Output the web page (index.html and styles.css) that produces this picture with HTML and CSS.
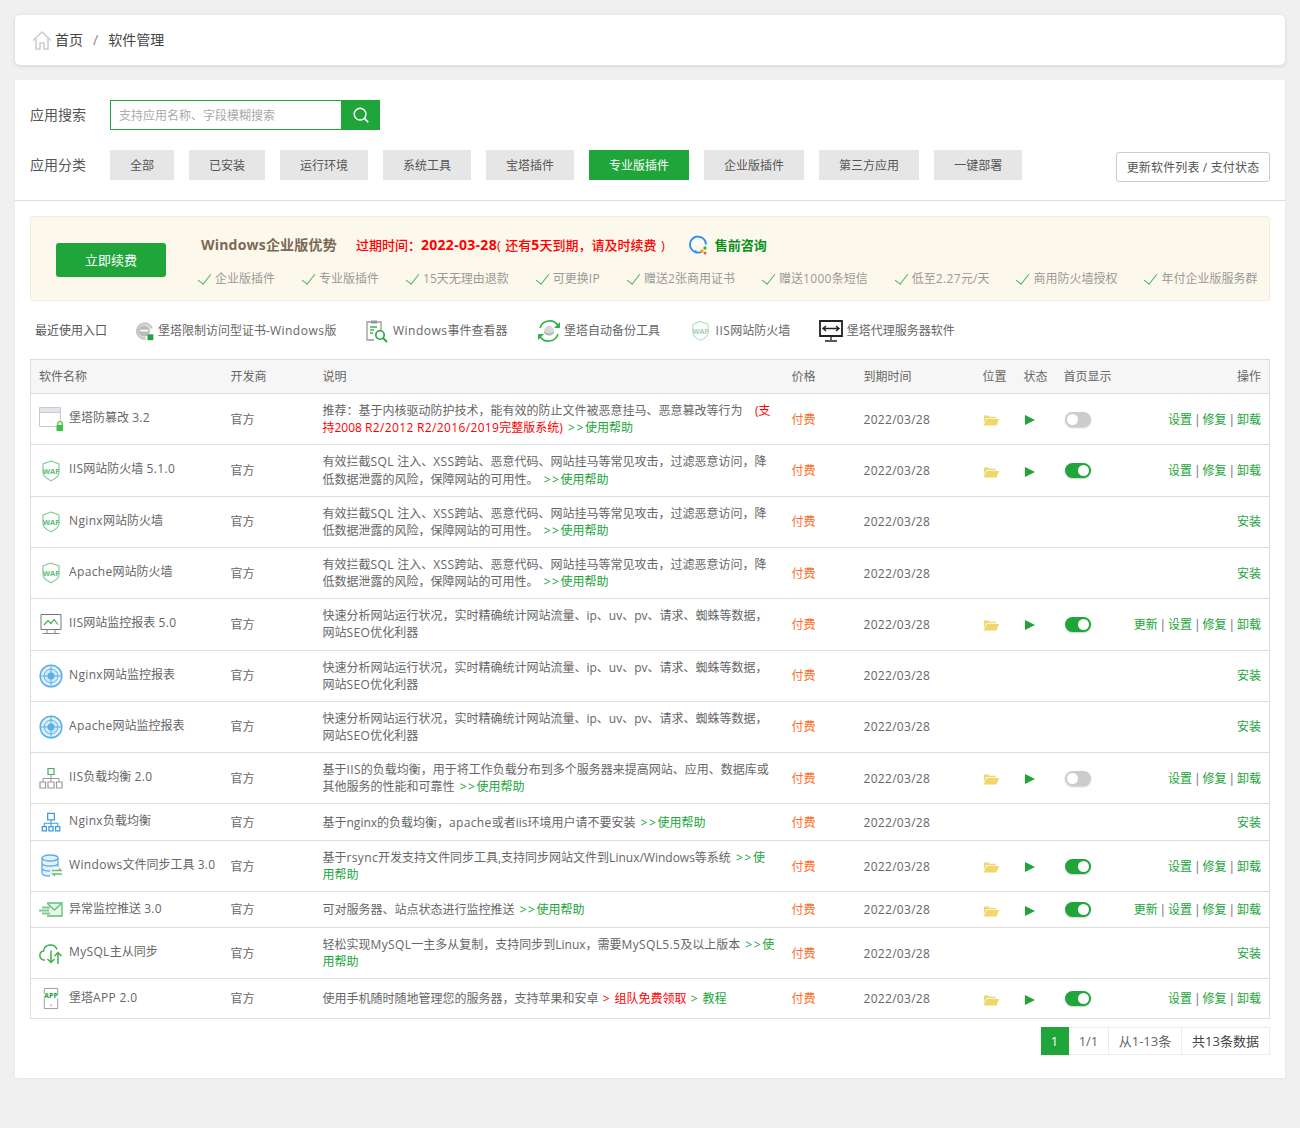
FILE: index.html
```html
<!DOCTYPE html>
<html lang="zh">
<head>
    <meta charset="UTF-8">
    <meta name="viewport" content="width=device-width, initial-scale=1.0">
    <title>软件管理</title>
    <link rel="stylesheet" href="styles.css">
</head>
<body>
    <!-- 图标 -->
    <svg class="defs" width="0" height="0">
        <symbol id="i-folder" viewBox="0 0 16 12">
            <path d="M1 1.500h4.500l1 1.200H13v1.500H3.200L1 9z" fill="#f0d66b"/>
            <path d="M3.600 5H16l-2.400 6.600H.6z" fill="#f0d66b"/>
        </symbol>
        <symbol id="i-window" viewBox="0 0 24 24">
            <path d="M19.500 19.500H.5V.5h21v14" fill="none" stroke="#c9c9d2"/>
            <path d="M1 1h20v4H1z" fill="#e6e6ea"/>
            <path d="M.5 5.500h21" stroke="#c9c9d2"/>
            <path d="M21 14.500a2.200 2.200 0 0 0-2.200 2.200v1.300M21 14.500a2.200 2.200 0 0 1 2.200 2.200v1.300" fill="none" stroke="#3fc33f" stroke-width="1.200"/>
            <path d="M17.500 18h7v6h-7z" fill="#3fc33f"/>
        </symbol>
        <symbol id="i-waf" viewBox="0 0 24 24">
            <path d="M12 2l8 3v8.500c0 3.700-4.800 6.800-8 8.300-3.200-1.500-8-4.600-8-8.300V5z" fill="none" stroke="#7ccb8e" stroke-width="1.100"/>
            <text x="12" y="14.800" text-anchor="middle" class="waf-text">WAF</text>
        </symbol>
        <symbol id="i-monitor" viewBox="0 0 24 24">
            <path d="M2 2.500h20v15H2z" fill="none" stroke="#777"/>
            <path d="M5 13l4-4.500 3 3 3-4 4 5" fill="none" stroke="#3fb14f" stroke-width="1.200"/>
            <path d="M8 17.500v3.500M16 17.500v3.500M3.500 21.500h17" stroke="#888" fill="none"/>
        </symbol>
        <symbol id="i-target" viewBox="0 0 24 24">
            <circle cx="12" cy="12" r="10.800" fill="#e3f2fb" stroke="#5bb0e6" stroke-width="1.500"/>
            <circle cx="12" cy="12" r="7" fill="#cfe8f8" stroke="#5bb0e6"/>
            <circle cx="12" cy="12" r="3.500" fill="#5bb0e6"/>
            <path d="M12 1v22M1 12h22" stroke="#5bb0e6"/>
        </symbol>
        <symbol id="i-tree" viewBox="0 0 24 24">
            <path d="M9 2.500h6v6H9z" fill="none" stroke="#3fb14f" stroke-width="1.200"/>
            <path d="M12 8.500v4M4 16v-3.500h16V16M12 12.500V16" fill="none" stroke="#999"/>
            <path d="M1 16h5.500v6H1zM9 16h6v6H9zM17.500 16H23v6h-5.500z" fill="none" stroke="#999" stroke-width="1.200"/>
        </symbol>
        <symbol id="i-tree-blue" viewBox="0 0 24 24">
            <path d="M8 1.500h8v8H8z" fill="none" stroke="#3d9ae0" stroke-width="1.500"/>
            <path d="M12 9.500v4M4 17v-3.500h16V17M12 13.500V17" fill="none" stroke="#3d9ae0" stroke-width="1.300"/>
            <path d="M1.500 17.500h5v5h-5zM9.500 17.500h5v5h-5zM17.500 17.500h5v5h-5z" fill="none" stroke="#3d9ae0" stroke-width="1.500"/>
        </symbol>
        <symbol id="i-db" viewBox="0 0 24 24">
            <path d="M3 4v15c0 2 4 3 8 3h3V14l5-1V4z" fill="#e3f2fb"/>
            <ellipse cx="11" cy="4" rx="8" ry="3" fill="#e3f2fb" stroke="#5bb0e6" stroke-width="1.300"/>
            <path d="M3 4v15c0 2 4 3 8 3M19 4v9M3 9c0 2 4 3 8 3s8-1 8-3M3 14c0 2 4 3 8 3" fill="none" stroke="#5bb0e6" stroke-width="1.300"/>
            <path d="M13 16.500h9l-2-2M23 20h-9l2 2" fill="none" stroke="#66bb77" stroke-width="1.300"/>
        </symbol>
        <symbol id="i-mail" viewBox="0 0 24 16">
            <path d="M8 1.500h15v13H8" fill="#eaf7ed" stroke="#5fbf75" stroke-width="1.300"/>
            <path d="M8.500 2l7 6.500L22.500 2" fill="none" stroke="#5fbf75" stroke-width="1.300"/>
            <path d="M3 6h8M0 9h10M3 12h8" stroke="#7bcb8d" stroke-width="2"/>
        </symbol>
        <symbol id="i-cloud" viewBox="0 0 24 24">
            <path d="M6 19H5a4.500 4.500 0 0 1-.5-8.900A7 7 0 0 1 18 8.500" fill="none" stroke="#3fb14f" stroke-width="1.500"/>
            <path d="M12 9.500v12M8.500 18l3.500 3.500 3.500-3.500M19 23V11.500M15.500 15l3.500-3.500 3.500 3.500" fill="none" stroke="#3fb14f" stroke-width="1.500"/>
        </symbol>
        <symbol id="i-app" viewBox="0 0 24 24">
            <path d="M5 7V1.500h14V7M5 12v10.500h14V12" fill="none" stroke="#999"/>
            <text x="12" y="11.800" text-anchor="middle" class="app-text">APP</text>
            <circle cx="12" cy="19" r=".8" fill="#888"/>
        </symbol>
        <symbol id="i-cert" viewBox="0 0 24 24">
            <path d="M20 9A9 9 0 1 0 13 21" fill="none" stroke="#c8c8c8" stroke-width="3"/>
            <circle cx="11" cy="12" r="7" fill="#bbb"/>
            <path d="M6 11.500h10" stroke="#fff" stroke-width="2"/>
            <path d="M15 16h7v7h-7z" fill="#20a53a"/>
        </symbol>
        <symbol id="i-clip" viewBox="0 0 24 24">
            <path d="M5 3h11v8M9 21H2V3h3" fill="none" stroke="#999" stroke-width="1.300"/>
            <path d="M6 1.500h6v3H6z" fill="#999"/>
            <path d="M5 8h7M5 11h4M5 14h3" stroke="#3fb14f" stroke-width="1.300"/>
            <circle cx="15" cy="16" r="4.200" fill="none" stroke="#20a53a" stroke-width="1.600"/>
            <path d="M18 19l4 4" stroke="#20a53a" stroke-width="1.800"/>
        </symbol>
        <symbol id="i-backup" viewBox="0 0 24 24">
            <path d="M3 9a10 10 0 0 1 18-2.500M21 15a10 10 0 0 1-18 2.500" fill="none" stroke="#35b04b" stroke-width="1.600"/>
            <path d="M23 3v6h-6zM1 21v-6h6z" fill="#35b04b"/>
            <circle cx="12" cy="12" r="5" fill="#d7d7d7"/>
            <path d="M7 13c2 3 8 3 10 0" fill="none" stroke="#999"/>
        </symbol>
        <symbol id="i-proxy" viewBox="0 0 24 24">
            <path d="M1 2h22v15H1z" fill="none" stroke="#222" stroke-width="1.800"/>
            <path d="M4 9.500h16M7 7L4 9.500 7 12M17 7l3 2.500-3 2.500" fill="none" stroke="#222" stroke-width="1.400"/>
            <path d="M12 17v4M6 22h12" stroke="#222" stroke-width="1.300"/>
        </symbol>
        <symbol id="i-chat" viewBox="0 0 20 20">
            <path d="M13 16.500A8 8 0 1 1 17 9.500" fill="none" stroke="#1e90ff" stroke-width="1.800"/>
            <path d="M5 17.500l1.500-2.500 2 1.500z" fill="#1e90ff"/>
            <circle cx="16" cy="13" r="1.700" fill="#3cb44b"/>
            <circle cx="13" cy="16" r="1.700" fill="#f5a623"/>
            <circle cx="16" cy="18" r="1.500" fill="#f0642d"/>
        </symbol>
    </svg>

    <div class="crumb">
        <svg class="home" viewBox="0 0 20 20"><path d="M1 10.500L10 2l9 8.500M4 8.500V19h4v-6h4v6h4V8.500" fill="none" stroke="#ccc" stroke-width="1.500"/></svg>
        <span>首页</span>
        <span class="crumb-sep">/</span>
        <span>软件管理</span>
    </div>

    <div class="main">
        <div class="filter">
            <div class="filter-row">
                <label class="filter-label">应用搜索</label>
                <div class="search">
                    <input class="search-input" type="text" placeholder="支持应用名称、字段模糊搜索">
                    <button class="search-btn" type="button">
                        <svg viewBox="0 0 20 20" width="18" height="18"><circle cx="9" cy="9" r="6.500" fill="none" stroke="#fff" stroke-width="1.600"/><path d="M13.500 13.500l4.500 4.500" stroke="#fff" stroke-width="1.800"/></svg>
                    </button>
                </div>
            </div>
            <div class="filter-row cate-row">
                <label class="filter-label">应用分类</label>
                <div class="cate">
                    <span>全部</span>
                    <span>已安装</span>
                    <span>运行环境</span>
                    <span>系统工具</span>
                    <span>宝塔插件</span>
                    <span class="on">专业版插件</span>
                    <span>企业版插件</span>
                    <span>第三方应用</span>
                    <span>一键部署</span>
                </div>
                <a class="refresh" href="#">更新软件列表 / 支付状态</a>
            </div>
        </div>

        <div class="content">
            <div class="banner">
                <a class="renew" href="#">立即续费</a>
                <div class="banner-info">
                    <div class="banner-top">
                        <span class="banner-title">Windows企业版优势</span>
                        <span class="banner-expire">过期时间：<b>2022-03-28</b>( 还有<b>5</b>天到期，请及时续费 )</span>
                        <svg class="chat"><use href="#i-chat"/></svg>
                        <a class="consult" href="#">售前咨询</a>
                    </div>
                    <ul class="perks">
                        <li>企业版插件</li>
                        <li>专业版插件</li>
                        <li>15天无理由退款</li>
                        <li>可更换<span class="en">IP</span></li>
                        <li>赠送2张商用证书</li>
                        <li>赠送<span class="en">1000</span>条短信</li>
                        <li>低至<span class="en">2.27</span>元/天</li>
                        <li>商用防火墙授权</li>
                        <li>年付企业版服务群</li>
                    </ul>
                </div>
            </div>

            <div class="recent">
                <span class="recent-title">最近使用入口</span>
                <a href="#"><svg class="small"><use href="#i-cert"/></svg>堡塔限制访问型证书-<span class="en">Windows</span>版</a>
                <a href="#"><svg><use href="#i-clip"/></svg><span class="en">Windows</span>事件查看器</a>
                <a href="#"><svg><use href="#i-backup"/></svg>堡塔自动备份工具</a>
                <a href="#"><svg class="faded"><use href="#i-waf"/></svg><span class="en">IIS</span>网站防火墙</a>
                <a href="#"><svg><use href="#i-proxy"/></svg>堡塔代理服务器软件</a>
            </div>

            <table class="soft">
                <colgroup>
                    <col class="c-name"><col class="c-dev"><col class="c-desc"><col class="c-price"><col class="c-date"><col class="c-pos"><col class="c-state"><col class="c-home"><col>
                </colgroup>
                <thead>
                    <tr><th>软件名称</th><th>开发商</th><th>说明</th><th>价格</th><th>到期时间</th><th>位置</th><th>状态</th><th>首页显示</th><th class="right">操作</th></tr>
                </thead>
                <tbody>
                    <tr>
                        <td><div class="name"><svg class="ic"><use href="#i-window"/></svg><span>堡塔防篡改 <b class="en">3.2</b></span></div></td>
                        <td>官方</td>
                        <td>推荐：基于内核驱动防护技术，能有效的防止文件被恶意挂马、恶意篡改等行为&nbsp;&nbsp;&nbsp; <span class="red">(支持2008 <b class="en">R2/2012 R2/2016/2019</b>完整版系统)</span> <a class="help" href="#"><i>&gt;&gt;</i>使用帮助</a></td>
                        <td class="price">付费</td>
                        <td class="date">2022/03/28</td>
                        <td><svg class="folder"><use href="#i-folder"/></svg></td>
                        <td><span class="play"></span></td>
                        <td><span class="switch"></span></td>
                        <td class="ops"><a href="#">设置</a> | <a href="#">修复</a> | <a href="#">卸载</a></td>
                    </tr>
                    <tr>
                        <td><div class="name"><svg class="ic"><use href="#i-waf"/></svg><span><b class="en">IIS</b>网站防火墙 <b class="en">5.1.0</b></span></div></td>
                        <td>官方</td>
                        <td>有效拦截<b class="en">SQL </b>注入、<b class="en">XSS</b>跨站、恶意代码、网站挂马等常见攻击，过滤恶意访问，降低数据泄露的风险，保障网站的可用性。 <a class="help" href="#"><i>&gt;&gt;</i>使用帮助</a></td>
                        <td class="price">付费</td>
                        <td class="date">2022/03/28</td>
                        <td><svg class="folder"><use href="#i-folder"/></svg></td>
                        <td><span class="play"></span></td>
                        <td><span class="switch on"></span></td>
                        <td class="ops"><a href="#">设置</a> | <a href="#">修复</a> | <a href="#">卸载</a></td>
                    </tr>
                    <tr>
                        <td><div class="name"><svg class="ic"><use href="#i-waf"/></svg><span><b class="en">Nginx</b>网站防火墙</span></div></td>
                        <td>官方</td>
                        <td>有效拦截<b class="en">SQL </b>注入、<b class="en">XSS</b>跨站、恶意代码、网站挂马等常见攻击，过滤恶意访问，降低数据泄露的风险，保障网站的可用性。 <a class="help" href="#"><i>&gt;&gt;</i>使用帮助</a></td>
                        <td class="price">付费</td>
                        <td class="date">2022/03/28</td>
                        <td></td>
                        <td></td>
                        <td></td>
                        <td class="ops"><a href="#">安装</a></td>
                    </tr>
                    <tr>
                        <td><div class="name"><svg class="ic"><use href="#i-waf"/></svg><span><b class="en">Apache</b>网站防火墙</span></div></td>
                        <td>官方</td>
                        <td>有效拦截<b class="en">SQL </b>注入、<b class="en">XSS</b>跨站、恶意代码、网站挂马等常见攻击，过滤恶意访问，降低数据泄露的风险，保障网站的可用性。 <a class="help" href="#"><i>&gt;&gt;</i>使用帮助</a></td>
                        <td class="price">付费</td>
                        <td class="date">2022/03/28</td>
                        <td></td>
                        <td></td>
                        <td></td>
                        <td class="ops"><a href="#">安装</a></td>
                    </tr>
                    <tr>
                        <td><div class="name"><svg class="ic"><use href="#i-monitor"/></svg><span><b class="en">IIS</b>网站监控报表 <b class="en">5.0</b></span></div></td>
                        <td>官方</td>
                        <td>快速分析网站运行状况，实时精确统计网站流量、ip、uv、pv、请求、蜘蛛等数据，网站<b class="en">SEO</b>优化利器</td>
                        <td class="price">付费</td>
                        <td class="date">2022/03/28</td>
                        <td><svg class="folder"><use href="#i-folder"/></svg></td>
                        <td><span class="play"></span></td>
                        <td><span class="switch on"></span></td>
                        <td class="ops"><a href="#">更新</a> | <a href="#">设置</a> | <a href="#">修复</a> | <a href="#">卸载</a></td>
                    </tr>
                    <tr>
                        <td><div class="name"><svg class="ic"><use href="#i-target"/></svg><span><b class="en">Nginx</b>网站监控报表</span></div></td>
                        <td>官方</td>
                        <td>快速分析网站运行状况，实时精确统计网站流量、ip、uv、pv、请求、蜘蛛等数据，网站<b class="en">SEO</b>优化利器</td>
                        <td class="price">付费</td>
                        <td class="date">2022/03/28</td>
                        <td></td>
                        <td></td>
                        <td></td>
                        <td class="ops"><a href="#">安装</a></td>
                    </tr>
                    <tr>
                        <td><div class="name"><svg class="ic"><use href="#i-target"/></svg><span><b class="en">Apache</b>网站监控报表</span></div></td>
                        <td>官方</td>
                        <td>快速分析网站运行状况，实时精确统计网站流量、ip、uv、pv、请求、蜘蛛等数据，网站<b class="en">SEO</b>优化利器</td>
                        <td class="price">付费</td>
                        <td class="date">2022/03/28</td>
                        <td></td>
                        <td></td>
                        <td></td>
                        <td class="ops"><a href="#">安装</a></td>
                    </tr>
                    <tr>
                        <td><div class="name"><svg class="ic"><use href="#i-tree"/></svg><span><b class="en">IIS</b>负载均衡 <b class="en">2.0</b></span></div></td>
                        <td>官方</td>
                        <td>基于<b class="en">IIS</b>的负载均衡，用于将工作负载分布到多个服务器来提高网站、应用、数据库或其他服务的性能和可靠性 <a class="help" href="#"><i>&gt;&gt;</i>使用帮助</a></td>
                        <td class="price">付费</td>
                        <td class="date">2022/03/28</td>
                        <td><svg class="folder"><use href="#i-folder"/></svg></td>
                        <td><span class="play"></span></td>
                        <td><span class="switch"></span></td>
                        <td class="ops"><a href="#">设置</a> | <a href="#">修复</a> | <a href="#">卸载</a></td>
                    </tr>
                    <tr>
                        <td><div class="name"><svg class="ic ic-20"><use href="#i-tree-blue"/></svg><span><b class="en">Nginx</b>负载均衡</span></div></td>
                        <td>官方</td>
                        <td>基于nginx的负载均衡，<b class="en">apache</b>或者iis环境用户请不要安装 <a class="help" href="#"><i>&gt;&gt;</i>使用帮助</a></td>
                        <td class="price">付费</td>
                        <td class="date">2022/03/28</td>
                        <td></td>
                        <td></td>
                        <td></td>
                        <td class="ops"><a href="#">安装</a></td>
                    </tr>
                    <tr class="tight">
                        <td><div class="name"><svg class="ic"><use href="#i-db"/></svg><span><b class="en">Windows</b>文件同步工具 <b class="en">3.0</b></span></div></td>
                        <td>官方</td>
                        <td>基于<b class="en">rsync</b>开发支持文件同步工具,支持同步网站文件到Linux/Windows等系统 <a class="help" href="#"><i>&gt;&gt;</i>使用帮助</a></td>
                        <td class="price">付费</td>
                        <td class="date">2022/03/28</td>
                        <td><svg class="folder"><use href="#i-folder"/></svg></td>
                        <td><span class="play"></span></td>
                        <td><span class="switch on"></span></td>
                        <td class="ops"><a href="#">设置</a> | <a href="#">修复</a> | <a href="#">卸载</a></td>
                    </tr>
                    <tr class="tight">
                        <td><div class="name"><svg class="ic ic-19"><use href="#i-mail"/></svg><span>异常监控推送 <b class="en">3.0</b></span></div></td>
                        <td>官方</td>
                        <td>可对服务器、站点状态进行监控推送 <a class="help" href="#"><i>&gt;&gt;</i>使用帮助</a></td>
                        <td class="price">付费</td>
                        <td class="date">2022/03/28</td>
                        <td><svg class="folder"><use href="#i-folder"/></svg></td>
                        <td><span class="play"></span></td>
                        <td><span class="switch on"></span></td>
                        <td class="ops"><a href="#">更新</a> | <a href="#">设置</a> | <a href="#">修复</a> | <a href="#">卸载</a></td>
                    </tr>
                    <tr class="tight">
                        <td><div class="name"><svg class="ic"><use href="#i-cloud"/></svg><span><b class="en">MySQL</b>主从同步</span></div></td>
                        <td>官方</td>
                        <td>轻松实现<b class="en">MySQL</b>一主多从复制，支持同步到Linux，需要<b class="en">MySQL5.5</b>及以上版本 <a class="help" href="#"><i>&gt;&gt;</i>使用帮助</a></td>
                        <td class="price">付费</td>
                        <td class="date">2022/03/28</td>
                        <td></td>
                        <td></td>
                        <td></td>
                        <td class="ops"><a href="#">安装</a></td>
                    </tr>
                    <tr>
                        <td><div class="name"><svg class="ic ic-23"><use href="#i-app"/></svg><span>堡塔<b class="en">APP 2.0</b></span></div></td>
                        <td>官方</td>
                        <td>使用手机随时随地管理您的服务器，支持苹果和安卓 <a class="red" href="#"><i class="arrow">&gt;</i>组队免费领取</a> <a class="help" href="#"><i class="arrow">&gt;</i>教程</a></td>
                        <td class="price">付费</td>
                        <td class="date">2022/03/28</td>
                        <td><svg class="folder"><use href="#i-folder"/></svg></td>
                        <td><span class="play"></span></td>
                        <td><span class="switch on"></span></td>
                        <td class="ops"><a href="#">设置</a> | <a href="#">修复</a> | <a href="#">卸载</a></td>
                    </tr>
                </tbody>
            </table>

            <div class="pager">
                <span class="cur">1</span>
                <span class="p-1">1/1</span>
                <span class="p-2">从1-13条</span>
                <span class="p-3">共13条数据</span>
            </div>
        </div>
    </div>
</body>
</html>
```

FILE: styles.css
```css
*{
    margin: 0;
    padding: 0;
    box-sizing: border-box;
}
html{
    background-color: #f0f0f0;
}
body{
    padding: 15px 15px 50px;
    font-family: "Open Sans", "Noto Sans CJK SC", sans-serif;
    font-size: 12px;
    line-height: 1.42857;
    color: #666;
}
a{
    text-decoration: none;
    color: inherit;
}
ul{
    list-style: none;
}
.defs{
    display: none;
}
.waf-text{
    font-family: "Open Sans", sans-serif;
    font-size: 7.5px;
    font-weight: 700;
    fill: #5dbb74;
}
.app-text{
    font-family: "Open Sans", sans-serif;
    font-size: 7.5px;
    font-weight: 700;
    fill: #20a53a;
}
/* 西文略宽一点 */
.en{
    font-weight: 400;
    letter-spacing: .35px;
}

/* 面包屑 */
.crumb{
    display: flex;
    align-items: center;
    height: 50px;
    padding-left: 17px;
    background-color: #fff;
    border-radius: 5px;
    box-shadow: 0 1px 4px rgba(0, 0, 0, .12);
    font-size: 14px;
    color: #444;
}
.home{
    width: 20px;
    height: 20px;
    margin-right: 3px;
}
.crumb-sep{
    margin: 0 10px;
    color: #888;
}

/* 主体 */
.main{
    margin-top: 15px;
    background-color: #fff;
    box-shadow: 0 1px 3px rgba(0, 0, 0, .05);
}
.filter{
    padding: 20px 15px;
    border-bottom: 1px solid #ddd;
}
.filter-row{
    display: flex;
    align-items: center;
    height: 30px;
}
.cate-row{
    margin-top: 20px;
}
.filter-label{
    width: 80px;
    font-size: 14px;
    color: #555;
}
.search{
    display: flex;
    width: 270px;
    height: 30px;
}
.search-input{
    flex: 1;
    min-width: 0;
    padding: 1px 0 0 8px;
    border: 1px solid #20a53a;
    border-right: 0;
    outline: none;
    font: inherit;
}
.search-input::placeholder{
    color: #aaa;
}
.search-btn{
    width: 39px;
    border: 0;
    background-color: #20a53a;
    display: flex;
    align-items: center;
    justify-content: center;
}
.cate{
    display: flex;
    gap: 15px;
}
.cate span{
    height: 30px;
    line-height: 31px;
    padding: 0 20px;
    background-color: #e6e6e6;
    color: #555;
}
.cate .on{
    background-color: #20a53a;
    color: #fff;
}
.refresh{
    margin-left: auto;
    margin-top: 4px;
    width: 154px;
    height: 30px;
    line-height: 30px;
    text-align: center;
    white-space: nowrap;
    letter-spacing: .15px;
    border: 1px solid #ccc;
    border-radius: 3px;
    color: #555;
}
.content{
    padding: 15px 15px 23px;
}

/* 续费横幅 */
.banner{
    display: flex;
    align-items: flex-start;
    height: 85px;
    background-color: #fdf8ec;
    border: 1px solid #f3ecd8;
    border-radius: 3px;
}
.renew{
    flex: none;
    width: 110px;
    height: 34px;
    margin: 26px 0 0 25px;
    line-height: 34px;
    text-align: center;
    background-color: #20a53a;
    border-radius: 3px;
    font-size: 13px;
    color: #fff;
}
.banner-info{
    flex: none;
    margin: 18px 0 0 31px;
}
.banner-top{
    display: flex;
    align-items: center;
    height: 20px;
    padding-left: 4px;
}
.banner-title{
    margin-right: 19px;
    font-size: 14px;
    font-weight: 700;
    letter-spacing: .2px;
    color: #7a6a55;
}
.banner-expire{
    font-size: 13px;
    font-weight: 500;
    word-spacing: 1px;
    color: #f00;
}
.banner-expire b{
    font-size: 14px;
    letter-spacing: .3px;
}
.chat{
    width: 20px;
    height: 20px;
    margin: 0 6px 0 24px;
}
.consult{
    font-size: 13px;
    font-weight: 700;
    color: #0a8f1e;
}
.perks{
    display: flex;
    gap: 26px;
    margin-top: 14px;
    line-height: 20px;
    color: #999;
}
.perks li{
    display: flex;
    white-space: nowrap;
}
.perks li::before{
    content: "";
    width: 6px;
    height: 12px;
    margin: 2px 7px 0 4px;
    border: solid #45b35a;
    border-width: 0 1px 1px 0;
    transform: rotate(38deg);
}

/* 最近使用 */
.recent{
    display: flex;
    align-items: center;
    height: 58px;
    padding: 1px 0 0 5px;
    white-space: nowrap;
}
.recent-title{
    margin-right: 28px;
    color: #555;
}
.recent a{
    display: flex;
    align-items: center;
    margin-right: 29px;
    color: #666;
}
.recent .en{
    letter-spacing: .5px;
}
.recent svg{
    width: 24px;
    height: 24px;
    margin-right: 3.5px;
}
.recent .small{
    width: 20px;
    height: 20px;
    margin-right: 3px;
}
.recent .faded{
    width: 23px;
    opacity: .6;
}

/* 软件列表 */
.soft{
    width: 100%;
    table-layout: fixed;
    border-collapse: collapse;
    border: 1px solid #ddd;
}
.c-name{ width: 192px; }
.c-dev{ width: 92px; }
.c-desc{ width: 469px; }
.c-price{ width: 72px; }
.c-date{ width: 119px; }
.c-pos{ width: 41px; }
.c-state{ width: 40px; }
.c-home{ width: 64px; }
.soft th, .soft td{
    padding: 8px;
    text-align: left;
    font-weight: 400;
    vertical-align: middle;
    border-bottom: 1px solid #ddd;
}
.soft th{
    background-color: #f6f6f6;
    white-space: nowrap;
}
.soft .right{
    text-align: right;
}
.soft .tight td{
    line-height: 17px;
}
.soft i{
    font-style: normal;
    letter-spacing: 1.6px;
    margin-left: 2px;
}
.soft .arrow{
    letter-spacing: 5px;
    margin-left: 1px;
}
.name{
    display: flex;
    align-items: center;
    white-space: nowrap;
}
.name span{
    margin-top: -3px;
}
.ic{
    flex: none;
    width: 24px;
    height: 24px;
    margin-right: 6px;
}
.ic-20{ height: 20px; }
.ic-19{ height: 19px; }
.ic-23{ height: 23px; }
.red{
    color: #f00;
}
.help{
    color: #20a53a;
}
.price{
    color: #fc6d26;
}
.date{
    letter-spacing: .3px;
}
.folder{
    display: block;
    width: 16px;
    height: 12px;
    margin-top: 2px;
}
.play{
    display: block;
    width: 0;
    height: 0;
    margin: 2px 0 0 1px;
    border-left: 10px solid #20a53a;
    border-top: 5.5px solid transparent;
    border-bottom: 5.5px solid transparent;
}
.switch{
    display: block;
    position: relative;
    width: 26px;
    height: 15px;
    margin-left: 1px;
    background-color: #ccc;
    border-radius: 8px;
    box-shadow: 0 1px 2px rgba(0, 0, 0, .2);
}
.switch::after{
    content: "";
    position: absolute;
    top: 2px;
    left: 2px;
    width: 11px;
    height: 11px;
    background-color: #fff;
    border-radius: 50%;
}
.switch.on{
    background-color: #20a53a;
}
.switch.on::after{
    left: 13px;
}
.ops{
    text-align: right !important;
    white-space: nowrap;
    word-spacing: -1.2px;
    color: #666;
}
.ops a{
    color: #20a53a;
}

/* 分页 */
.pager{
    display: flex;
    justify-content: flex-end;
    margin-top: 8px;
    height: 28px;
    line-height: 26px;
    font-size: 13px;
    text-align: center;
}
.pager span{
    border: 1px solid #ececec;
    border-left: 0;
}
.pager .cur{
    width: 28px;
    background-color: #20a53a;
    border-color: #20a53a;
    color: #fff;
}
.p-1{ width: 40px; }
.p-2{ width: 73px; }
.p-3{ width: 88px; color: #444; }
```
